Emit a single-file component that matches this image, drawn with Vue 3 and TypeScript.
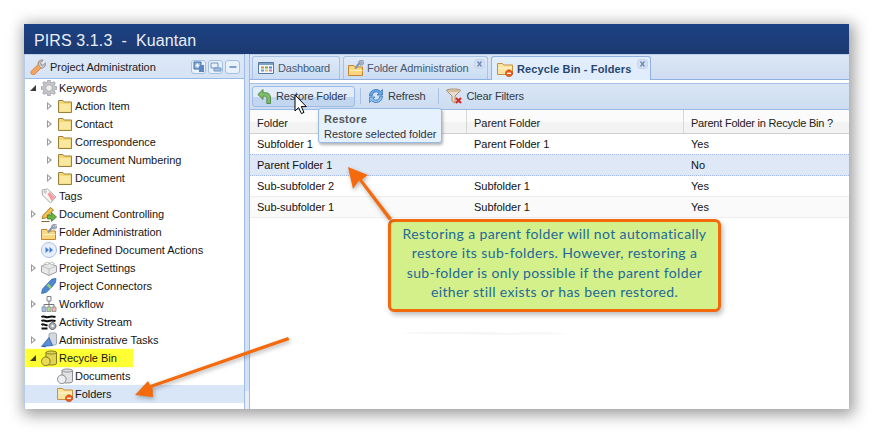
<script setup lang="ts">
type Shape = { d: string; fill?: string; stroke?: string; sw?: number }
const appTitle = 'PIRS 3.1.3\u00a0\u00a0-\u00a0\u00a0Kuantan'
const icons: Record<string, Shape[]> = {
  gear: [
    { d: 'M6.800 0h2.400l.4 2.200 1.500.6L12.900 1.500 14.500 3.100l-1.300 1.800.6 1.500 2.200.4v2.400l-2.200.4-.6 1.500 1.300 1.800-1.600 1.600-1.800-1.300-1.500.6-.4 2.200H6.800l-.4-2.200-1.500-.6-1.800 1.300L1.500 12.900l1.300-1.800-.6-1.500L0 9.200V6.800l2.200-.4.6-1.500L1.500 3.100 3.100 1.500l1.800 1.300 1.500-.6z', fill: '#c3c5c8', stroke: '#8d9094', sw: 0.6 },
    { d: 'M8 4.800a3.200 3.200 0 1 0 .01 0z', fill: '#f0f0f0', stroke: '#9a9c9f', sw: 0.7 }
  ],
  folder: [
    { d: 'M1.500 2.500h4.500l1.200 1.500h7.300v10.500h-13z', fill: '#f4d675', stroke: '#9c8138', sw: 1 },
    { d: 'M2.500 6h11v7.500h-11z', fill: '#fbe8a0' }
  ],
  tag: [
    { d: 'M1 2l5.500-1 8.500 8-5.500 6-8-8z', fill: '#f5f5f5', stroke: '#a5a8ad', sw: 1 },
    { d: 'M6.500 6l2-2 5.500 5.200-3.500 3.800z', fill: '#f49ca0' },
    { d: 'M4.300 3a1 1 0 1 0 .01 0z', fill: '#fff', stroke: '#8f9296', sw: 0.7 }
  ],
  control: [
    { d: 'M1 12.500l1-3 7.500-8 3 2.500-7.500 8z', fill: '#f2c24c', stroke: '#96681e', sw: 0.8 },
    { d: 'M.5 15.500h8', stroke: '#8a6a28', sw: 1 },
    { d: 'M6.500 9h4V6.500l5 4.500-5 4.500V13h-4z', fill: '#68b344', stroke: '#3d7d2a', sw: 0.8 }
  ],
  admin: [
    { d: 'M.5 5.500h5.500l1.500 1.500h7v8.500H.5z', fill: '#f9d67f', stroke: '#c5852c', sw: 1 },
    { d: 'M1.500 10h13v1h-13z', fill: '#fff3c4' },
    { d: 'M7 8.500l5-6', stroke: '#8796a8', sw: 2 },
    { d: 'M10.500 1.500L12.500 0h3l-2 2 1 1 1.500-1.500-.3 2.500-3 1.500z', fill: '#a8b2bf', stroke: '#737f8d', sw: 0.5 }
  ],
  forward: [
    { d: 'M8 .5a7.500 7.500 0 1 0 .01 0z', fill: '#e6eefa', stroke: '#a9c0e2', sw: 1 },
    { d: 'M4.500 5v6l3.500-3zM8.500 5v6l3.500-3z', fill: '#3f7fce' }
  ],
  brick: [
    { d: 'M.5 6l7.500-3 7.500 3v6L8 15.500.5 12z', fill: '#e8e8e8', stroke: '#9d9fa2', sw: 1 },
    { d: 'M.5 6L8 9l7.500-3M8 9v6.500', stroke: '#b5b7ba', sw: 0.8 },
    { d: 'M3.500 3.500L6 2l2.500 1.500L6 5z M8.500 3.500L11 2l2.500 1.500L11 5z', fill: '#f6f6f6', stroke: '#a2a4a7', sw: 0.6 }
  ],
  connector: [
    { d: 'M.5 15.500l1-4.500 5.500-6 4-4 4-.5-.5 4-3.500 4.500-6 5.500z', fill: '#4e86cf', stroke: '#2d5fa6', sw: 0.7 },
    { d: 'M6.500 6.500l3.500 3.500', stroke: '#8fcf72', sw: 2.500 }
  ],
  flow: [
    { d: 'M6 .5h4v4.500H6z', fill: '#fafafa', stroke: '#7f8288', sw: 1 },
    { d: 'M8 5v3.500M3 11V8.500h10V11M8 8.500V11', stroke: '#70737a', sw: 1 },
    { d: 'M1 11h4v4.500H1z', fill: '#9cc4ef', stroke: '#8b8d92', sw: 0.8 },
    { d: 'M6 11h4v4.500H6z', fill: '#b4dc96', stroke: '#8b8d92', sw: 0.8 },
    { d: 'M11 11h4v4.500h-4z', fill: '#f3b4b4', stroke: '#8b8d92', sw: 0.8 }
  ],
  stream: [
    { d: 'M.5 3c2-2 4 1 7 0s4-1 7 0', stroke: '#111', sw: 2 },
    { d: 'M.5 7c2-2 4 1 7 0s4-1 7 0', stroke: '#111', sw: 2 },
    { d: 'M.5 11c2-2 3 1 6 0', stroke: '#111', sw: 2 },
    { d: 'M.5 14.500h6', stroke: '#111', sw: 2 },
    { d: 'M11.500 8.500a3.500 3.500 0 1 0 .01 0z', fill: '#a9acb0', stroke: '#63666a', sw: 1 },
    { d: 'M11.500 10.800a1.200 1.200 0 1 0 .01 0z', fill: '#fff' }
  ],
  tasks: [
    { d: 'M8 2c0-1.500 7.500-1.500 7.500 0v10c0 1.500-7.500 1.500-7.500 0z', fill: '#d4d8de', stroke: '#8c96a3', sw: 0.8 },
    { d: 'M.5 14.500l7.500-9 3.500 8z', fill: '#5a8fd6', stroke: '#2e62a8', sw: 0.8 },
    { d: 'M.5 14.500l4-1v2z', fill: '#2f65ad' }
  ],
  bin: [
    { d: 'M5 2.500c0-2 10.500-2 10.500 0v11c0 2-10.500 2-10.500 0z', fill: '#e2d252', stroke: '#6f6f1e', sw: 0.9 },
    { d: 'M5 2.500c0 2 10.500 2 10.500 0', stroke: '#6f6f1e', sw: 0.8 },
    { d: 'M4.800 7a4.300 4.300 0 1 0 .01 0z', fill: '#e9db55', stroke: '#6f6f1e', sw: 0.9 }
  ],
  docs: [
    { d: 'M5 2.500c0-2 10.500-2 10.500 0v11c0 2-10.500 2-10.500 0z', fill: '#dfe1e4', stroke: '#7d8085', sw: 0.9 },
    { d: 'M5 2.500c0 2 10.500 2 10.500 0', stroke: '#7d8085', sw: 0.8 },
    { d: 'M4.800 7a4.300 4.300 0 1 0 .01 0z', fill: '#eceef0', stroke: '#7d8085', sw: 0.9 }
  ],
  deleted: [
    { d: 'M.5 2.500h5l1.500 1.500h8.500v9.500H.5z', fill: '#fbe3a0', stroke: '#c8923a', sw: 1 },
    { d: 'M1.500 6.500h13v1h-13z', fill: '#fff6d2' },
    { d: 'M12 8.800a3.500 3.500 0 1 0 .01 0z', fill: '#ea5b1c', stroke: '#b8400e', sw: 0.6 },
    { d: 'M10 12.300h4', stroke: '#fff', sw: 1.300 }
  ],
  dash: [
    { d: 'M.5 2.500h15v11H.5z', fill: '#f4f7fb', stroke: '#54779f', sw: 1 },
    { d: 'M1 3h14v2H1z', fill: '#7e9fc6' },
    { d: 'M3 6.500h3v2H3z', fill: '#e8863a' },
    { d: 'M7 6.500h3v2H7z', fill: '#6db24d' },
    { d: 'M11 6.500h3v2h-3z', fill: '#4e8bd4' },
    { d: 'M3 9.500h3v2H3z', fill: '#5ba6d8' },
    { d: 'M7 9.500h3v2H7z', fill: '#e6c644' },
    { d: 'M11 9.500h3v2h-3z', fill: '#c77ac0' }
  ],
  restore: [
    { d: 'M.8 6.500L6 1.500v3.200h2.500c3 0 5 2 5 5.300v5.500H9.800V10.500c0-1.500-.8-2.300-2-2.300H6v3.200z', fill: '#7fbd68', stroke: '#3f7e36', sw: 0.8 }
  ],
  refresh: [
    { d: 'M1.500 8a6.500 6.500 0 0 1 11-4.800L14.500 1.500v5.500H9l2-1.900A4 4 0 0 0 4.100 8z', fill: '#6ba6e4', stroke: '#2e6db5', sw: 0.7 },
    { d: 'M14.500 8a6.500 6.500 0 0 1-11 4.800L1.500 14.500V9H7l-2 1.900A4 4 0 0 0 11.900 8z', fill: '#8cc0ef', stroke: '#2e6db5', sw: 0.7 }
  ],
  filter: [
    { d: 'M.5 2.500c0-2 14-2 14 0L9 8v7l-3-2V8z', fill: '#e8ddd0', stroke: '#a0835c', sw: 0.9 },
    { d: 'M.5 2.500c0 1.500 14 1.500 14 0', fill: '#c89a5f' },
    { d: 'M10 10l5 5M15 10l-5 5', stroke: '#d8261f', sw: 2 }
  ],
  wrench: [
    { d: 'M2 15.500c-1.500-1-1.500-2.500-.5-3.500L8 5.500c-.5-2 1-4.500 4-4.500l1 .3-2.500 2.500.5 2 2 .5L15.500 4c.5 3-2 5.500-4.500 5L5 15c-1 1-2 1.300-3 .5z', fill: '#f6a45f', stroke: '#c8702e', sw: 0.7 },
    { d: 'M8.500 5.500c-.5-2 1-4 3.500-4.500l1 .3-2.500 2.500.5 2 2 .5L15.500 4c.5 3-2 5.500-4.500 5l-2-2z', fill: '#c7cbd0', stroke: '#868b91', sw: 0.6 }
  ]
}

type Node = { label: string; icon: string; depth: number; exp?: 'open' | 'closed'; cls?: string }
const tree: Node[] = [
  { label: 'Keywords', icon: 'gear', depth: 0, exp: 'open' },
  { label: 'Action Item', icon: 'folder', depth: 1, exp: 'closed' },
  { label: 'Contact', icon: 'folder', depth: 1, exp: 'closed' },
  { label: 'Correspondence', icon: 'folder', depth: 1, exp: 'closed' },
  { label: 'Document Numbering', icon: 'folder', depth: 1, exp: 'closed' },
  { label: 'Document', icon: 'folder', depth: 1, exp: 'closed' },
  { label: 'Tags', icon: 'tag', depth: 0 },
  { label: 'Document Controlling', icon: 'control', depth: 0, exp: 'closed' },
  { label: 'Folder Administration', icon: 'admin', depth: 0 },
  { label: 'Predefined Document Actions', icon: 'forward', depth: 0 },
  { label: 'Project Settings', icon: 'brick', depth: 0, exp: 'closed' },
  { label: 'Project Connectors', icon: 'connector', depth: 0 },
  { label: 'Workflow', icon: 'flow', depth: 0, exp: 'closed' },
  { label: 'Activity Stream', icon: 'stream', depth: 0 },
  { label: 'Administrative Tasks', icon: 'tasks', depth: 0, exp: 'closed' },
  { label: 'Recycle Bin', icon: 'bin', depth: 0, exp: 'open', cls: 'marked' },
  { label: 'Documents', icon: 'docs', depth: 1 },
  { label: 'Folders', icon: 'deleted', depth: 1, cls: 'selected' }
]
const tabs = [
  { label: 'Dashboard', icon: 'dash', cls: 't-dash' },
  { label: 'Folder Administration', icon: 'admin', cls: 't-admin', close: true },
  { label: 'Recycle Bin - Folders', icon: 'deleted', cls: 't-bin active', close: true }
]
const rows = [
  { folder: 'Subfolder 1', parent: 'Parent Folder 1', bin: 'Yes', cls: '' },
  { folder: 'Parent Folder 1', parent: '', bin: 'No', cls: 'sel' },
  { folder: 'Sub-subfolder 2', parent: 'Subfolder 1', bin: 'Yes', cls: '' },
  { folder: 'Sub-subfolder 1', parent: 'Subfolder 1', bin: 'Yes', cls: 'alt' }
]
</script>

<template>
  <div class="page">
    <div class="window">
      <header class="title">{{ appTitle }}</header>
      <div class="body">
        <aside class="side">
          <div class="side-head">
            <svg class="ico" viewBox="0 0 16 16"><path v-for="(s, i) in icons.wrench" :key="i" :d="s.d" :fill="s.fill || 'none'" :stroke="s.stroke" :stroke-width="s.sw" /></svg>
            <span class="side-title">Project Administration</span>
            <span class="tool"><svg viewBox="0 0 12 12"><path d="M1 1h7v7H1z" fill="#8fb0dc" stroke="#3d6ca8" /><path d="M6 4h5v7H6z" fill="#5b88c2" /><path d="M2.500 4.500h4M4.500 2.500v4" stroke="#fff" stroke-width="1.300" /></svg></span>
            <span class="tool"><svg viewBox="0 0 12 12"><path d="M1 2h7v5H1z" fill="#e8f0fa" stroke="#6f93c2" /><path d="M4 7h7v3H4z" fill="#a9c3e3" stroke="#6f93c2" /></svg></span>
            <span class="tool"><svg viewBox="0 0 12 12"><path d="M2.500 6h7" stroke="#5c86bd" stroke-width="1.500" /></svg></span>
          </div>
          <div class="tree">
            <div v-for="n in tree" :key="n.label" class="node" :class="[`d${n.depth}`, n.cls]">
              <span class="exp" :class="n.exp"></span>
              <svg class="ico" viewBox="0 0 16 16"><path v-for="(s, i) in icons[n.icon]" :key="i" :d="s.d" :fill="s.fill || 'none'" :stroke="s.stroke" :stroke-width="s.sw" /></svg>
              <span class="label">{{ n.label }}</span>
            </div>
          </div>
        </aside>
        <div class="split"></div>
        <main class="main">
          <div class="tabs">
            <div v-for="t in tabs" :key="t.label" class="tab" :class="t.cls">
              <svg class="ico" viewBox="0 0 16 16"><path v-for="(s, i) in icons[t.icon]" :key="i" :d="s.d" :fill="s.fill || 'none'" :stroke="s.stroke" :stroke-width="s.sw" /></svg>
              <span class="tab-label">{{ t.label }}</span>
              <span v-if="t.close" class="close"><svg viewBox="0 0 9 8"><path d="M2.500 1.500l4 5M6.500 1.500l-4 5" stroke="#6d8bb3" stroke-width="1.400" /></svg></span>
            </div>
          </div>
          <div class="toolbar">
            <div class="btn hover">
              <svg class="ico" viewBox="0 0 16 16"><path v-for="(s, i) in icons.restore" :key="i" :d="s.d" :fill="s.fill || 'none'" :stroke="s.stroke" :stroke-width="s.sw" /></svg>
              <span>Restore Folder</span>
            </div>
            <i class="sep"></i>
            <div class="btn plain">
              <svg class="ico" viewBox="0 0 16 16"><path v-for="(s, i) in icons.refresh" :key="i" :d="s.d" :fill="s.fill || 'none'" :stroke="s.stroke" :stroke-width="s.sw" /></svg>
              <span>Refresh</span>
            </div>
            <i class="sep"></i>
            <div class="btn plain">
              <svg class="ico" viewBox="0 0 16 16"><path v-for="(s, i) in icons.filter" :key="i" :d="s.d" :fill="s.fill || 'none'" :stroke="s.stroke" :stroke-width="s.sw" /></svg>
              <span>Clear Filters</span>
            </div>
          </div>
          <div class="grid">
            <div class="grow head">
              <div class="cell">Folder</div>
              <div class="cell">Parent Folder</div>
              <div class="cell narrow">Parent Folder in Recycle Bin ?</div>
            </div>
            <div v-for="r in rows" :key="r.folder" class="grow" :class="r.cls">
              <div class="cell">{{ r.folder }}</div>
              <div class="cell">{{ r.parent }}</div>
              <div class="cell">{{ r.bin }}</div>
            </div>
          </div>
        </main>
      </div>
      <div class="tip">
        <b>Restore</b>
        <span>Restore selected folder</span>
      </div>
      <div class="note">Restoring a parent folder will not automatically restore its sub-folders. However, restoring a sub-folder is only possible if the parent folder either still exists or has been restored.</div>
    </div>
    <svg class="overlay" viewBox="0 0 873 433" width="873" height="433">
      <path d="M400 333c50-2 90-1 110 0 20-2 40-1 60 1-50 1-120 1-170-1z" fill="#f6f6f6" />
      <g class="arrows" fill="#f56a0c">
        <path d="M288 337l1.500 3-137 47.500.5 9.500-18-2 13-14 2 4z" />
        <path d="M348 167l20 8-6 4.500 30 39-3 2-30-40-6 8.500z" />
      </g>
      <path d="M295 95v16l3.600-3.400 2.800 6 2.600-1.200-2.700-5.800h5z" fill="#fff" stroke="#000" stroke-width="1" />
    </svg>
  </div>
</template>

<style>
html, body { margin: 0; background: #fff; }
</style>

<style scoped>
.page { position: relative; width: 873px; height: 433px; overflow: hidden; padding: 24px; box-sizing: border-box; background: #fff; font: 11px/14px "Liberation Sans", Arial, sans-serif; letter-spacing: -.03px; color: #111; }
.window { position: relative; height: 385px; display: flex; flex-direction: column; background: #fff; box-shadow: 2px 3px 14px 3px rgba(0,0,0,.38); }
.title { height: 30px; flex: none; box-sizing: border-box; padding: 8px 0 0 10px; background: linear-gradient(#1c4184, #1c3a70); color: #e9eef6; font-size: 16px; line-height: 18px; letter-spacing: .1px; white-space: nowrap; }
.body { flex: 1; display: flex; min-height: 0; }
.side { width: 220px; flex: none; box-sizing: border-box; border-left: 1px solid #b5cdea; }
.side-head { height: 25px; box-sizing: border-box; display: flex; align-items: center; padding: 0 4px 0 5px; gap: 2px; background: linear-gradient(#dde8f7, #d6e3f5); border-bottom: 1px solid #99bbe8; border-top: 1px solid #b9d0ee; }
.side-title { flex: 1; margin-left: 2px; color: #222; }
.tool { width: 15px; height: 14px; box-sizing: border-box; border: 1px solid #a5c0e3; border-radius: 3px; background: #e8f1fc; display: flex; align-items: center; justify-content: center; }
.tool svg { width: 12px; height: 12px; }
.ico { width: 16px; height: 16px; flex: none; display: block; }
.node { height: 18px; display: flex; align-items: center; box-sizing: border-box; }
.node.d0 { padding-left: 5px; }
.node.d1 { padding-left: 21px; }
.exp { width: 10px; height: 9px; margin-right: 1px; position: relative; flex: none; }
.exp.closed::before { content: ""; position: absolute; left: 1px; top: 0; border-left: 5px solid #9a9a9a; border-top: 4.500px solid transparent; border-bottom: 4.500px solid transparent; }
.exp.closed::after { content: ""; position: absolute; left: 2px; top: 2px; border-left: 2.500px solid #fff; border-top: 2.500px solid transparent; border-bottom: 2.500px solid transparent; }
.exp.open::before { content: ""; position: absolute; left: 0; top: 1px; border-right: 6px solid #3b3b3b; border-top: 6px solid transparent; }
.label { margin-left: 2px; white-space: nowrap; color: #151515; }
.marked { background: #ffff33; width: 108px; box-shadow: 0 0 1px #ffff33; }
.selected { background: #d8e6f7; }
.split { width: 6px; flex: none; box-sizing: border-box; position: relative; background: #d3e1f4; border-left: 1px solid #9dbce6; border-right: 1px solid #9dbce6; }
.split::after { content: ""; position: absolute; left: 0; right: 0; bottom: 0; height: 18px; background: #e9eef6; }
.main { flex: 1; min-width: 0; display: flex; flex-direction: column; }
.tabs { height: 26px; flex: none; box-sizing: border-box; display: flex; align-items: flex-end; gap: 3px; padding-left: 2px; background: linear-gradient(#dce7f6, #cfdcf1); border-bottom: 1px solid #8fb2e3; border-top: 1px solid #b9d0ee; }
.tab { height: 23px; box-sizing: border-box; display: flex; align-items: center; gap: 4px; padding: 0 5px; position: relative; border: 1px solid #a7c2e6; border-bottom: 0; border-radius: 3px 3px 0 0; background: linear-gradient(#dfeafa, #cadcf3); color: #47596f; }
.tab-label { white-space: nowrap; }
.t-dash { width: 88px; letter-spacing: -.2px; }
.t-admin { width: 145px; padding-left: 4px; gap: 3px; letter-spacing: -.08px; }
.t-bin { width: 160px; }
.tab.active { height: 24px; margin-bottom: -1px; background: linear-gradient(#e3eefc, #dfecfc); font-weight: bold; letter-spacing: .12px; color: #27466f; border-color: #8fb2e3; }
.close { position: absolute; right: 2px; top: 2px; width: 11px; height: 10px; box-sizing: border-box; border: 1px solid #c3d4ec; border-radius: 3px; background: #d4e1f2; display: flex; }
.close svg { width: 9px; height: 8px; }
.toolbar { height: 27px; margin-top: 3px; flex: none; box-sizing: border-box; display: flex; align-items: center; gap: 5px; padding: 0 0 1px 2px; background: linear-gradient(#dae6f6, #cddcf1); border-top: 1px solid #a8c3e8; border-bottom: 1px solid #99bbe8; letter-spacing: -.15px; }
.btn { height: 21px; box-sizing: border-box; display: flex; align-items: center; gap: 4px; color: #303a46; border: 1px solid transparent; white-space: nowrap; }
.btn.plain { padding: 0 7px 0 1px; }
.btn.hover { width: 103px; padding-left: 4px; gap: 3px; border-color: #9dbbe3; border-radius: 3px; background: linear-gradient(#e2ecfa 55%, #c2d6f0 55%); }
.sep { width: 1px; height: 16px; background: #a9c1e0; }
.grid { flex: 1; }
.grow { display: grid; grid-template-columns: 217px 217px 1fr; height: 21px; box-sizing: border-box; border-bottom: 1px solid #ededed; }
.grow.head { height: 24px; background: linear-gradient(#fbfbfb 50%, #f3f3f3 50%); border-bottom: 1px solid #d0d0d0; }
.head .cell { padding-top: 6px; color: #222; border-right: 1px solid #d8d8d8; }
.head .narrow { letter-spacing: -.22px; border-right: 0; }
.cell { padding: 3px 0 0 7px; white-space: nowrap; overflow: hidden; color: #111; }
.grow.sel { background: #dfe8f6; border-top: 1px dotted #a3bae9; border-bottom: 1px dotted #a3bae9; height: 22px; margin-top: -1px; }
.grow.alt { background: #fafafa; }
.tip { position: absolute; left: 294px; top: 84px; width: 124px; height: 35px; box-sizing: border-box; display: flex; flex-direction: column; padding: 3px 5px; border: 1px solid #99bbe8; border-radius: 3px; background: #e6f1fe; box-shadow: 1px 2px 3px rgba(0,0,0,.3); }
.tip b { color: #555; line-height: 14px; letter-spacing: .3px; }
.tip span { color: #333; line-height: 16px; white-space: nowrap; }
.note { position: absolute; left: 364px; top: 195px; width: 333px; height: 93px; box-sizing: border-box; padding: 2px 6px 0; border: 3px solid #f26a0c; border-radius: 6px; background: #d4f08b; color: #22699a; font: 14px/19.400px Lato, sans-serif; letter-spacing: .38px; text-align: center; box-shadow: 2px 3px 5px rgba(0,0,0,.25); }
.overlay { position: absolute; left: 0; top: 0; pointer-events: none; }
.arrows { filter: drop-shadow(1px 2px 2px rgba(0,0,0,.3)); }
</style>
